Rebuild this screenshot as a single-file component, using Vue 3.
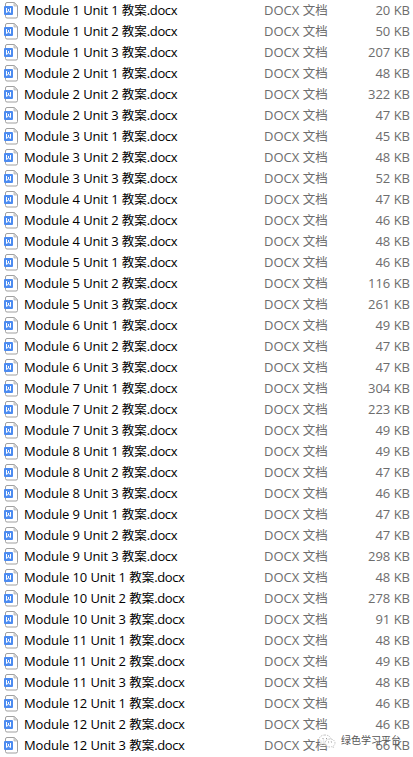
<script setup>
const sizes = [
  20, 50, 207, 48, 322, 47, 45, 48, 52, 47, 46, 48,
  46, 116, 261, 49, 47, 47, 304, 223, 49, 49, 47, 46,
  47, 47, 298, 48, 278, 91, 48, 49, 48, 46, 46, 66,
]
const files = sizes.map((size, i) => ({
  prefix: `Module ${Math.floor(i / 3) + 1} Unit ${(i % 3) + 1} `,
  size,
}))
</script>

<template>
  <main class="files">
    <div v-for="file in files" :key="file.prefix" class="row">
      <svg class="icon" viewBox="0 0 15 17">
        <path d="M1.500 2q0-1.500 1.500-1.500h7.300l3.200 3.200v10.800q0 1.500-1.500 1.500H3q-1.500 0-1.500-1.500z" fill="#fff" stroke="#a0a0a0" />
        <path d="M10 .5v3.500h3.500z" fill="#ddd" stroke="#b4b4b4" stroke-width=".8" />
        <rect x="0" y="4" width="9" height="9" rx="1" fill="#4c8bf0" />
        <path d="M2.500 6v4.500l2-1.500 2 1.500V6M4.500 7v2" fill="none" stroke="#fff" />
      </svg>
      <span class="name">{{ file.prefix }}<span class="cjk">教案</span><span class="ext">.docx</span></span>
      <span class="type">DOCX <span class="cjk">文档</span></span>
      <span class="size">{{ file.size }} KB</span>
    </div>
    <div class="watermark">
      <svg class="chat" viewBox="0 0 18 14">
        <g fill="#fff" fill-opacity=".8" stroke="#b5b5b5" stroke-width=".8" stroke-dasharray="1.5 1">
          <path d="M7 1C3.500 1 1 3 1 5.700c0 1.600.8 2.800 2 3.600L2.500 11l2.200-1 2.300.4c3.500 0 6-2 6-4.700S10.500 1 7 1z" />
          <path d="M12 5c-3 0-5 1.700-5 4s2 4 5 4l1.700-.3 1.900.9-.5-1.500c1.100-.7 1.900-1.700 1.900-3.100 0-2.300-2-4-5-4z" />
        </g>
        <path d="M4.500 4.500h1M8 4.500h1M10 8h1M13 8h1" stroke="#999" />
      </svg>
      <span>绿色学习平台</span>
    </div>
  </main>
</template>

<style>
body { margin: 0; background: #fff; }
</style>

<style scoped>
.files {
  position: relative;
  width: 413px;
  height: 757px;
  overflow: hidden;
  font: 13px/21px "Open Sans", "Noto Sans CJK SC", sans-serif;
  color: #000;
}
.row {
  display: grid;
  grid-template-columns: 20px 240px 80px 1fr;
  align-items: center;
  height: 21px;
  padding: 0 3px 0 4px;
  white-space: pre;
}
.icon { width: 15px; height: 17px; }
.row > span { height: 21px; }
.name { letter-spacing: -0.12px; }
.ext { letter-spacing: -0.4px; }
.cjk {
  font-family: "Noto Sans CJK SC", sans-serif;
  font-size: 12.5px;
  letter-spacing: 0;
  line-height: 1;
}
.type, .size { color: #6d6d6d; }
.size { text-align: right; }
.watermark {
  position: absolute;
  left: 318px;
  top: 730px;
  display: flex;
  align-items: center;
  gap: 5px;
  font-size: 10px;
  color: #555;
}
.chat { width: 18px; height: 14px; }
</style>
